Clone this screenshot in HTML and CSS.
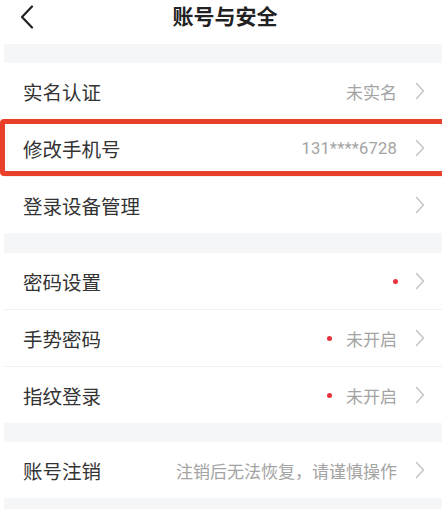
FILE: index.html
```html
<!DOCTYPE html>
<html lang="zh-CN">
<head>
<meta charset="utf-8">
<title>账号与安全</title>
<link rel="stylesheet" href="styles.css">
</head>
<body>
<header class="topbar">
  <svg class="back" width="14" height="24" viewBox="0 0 14 24"><polyline points="12,1.5 2,12 12,22.5" fill="none" stroke="#222" stroke-width="2.2" stroke-linecap="round" stroke-linejoin="round"/></svg>
  <h1 class="title">账号与安全</h1>
</header>
<main class="page">
  <div class="gap g1"></div>
  <section class="group">
    <div class="row"><span class="label">实名认证</span><span class="meta"><span class="value">未实名</span><svg class="chev" width="10" height="18" viewBox="0 0 10 18"><polyline points="1.5,1.5 8.5,9 1.5,16.5" fill="none" stroke="#c6c6c6" stroke-width="1.6" stroke-linecap="round" stroke-linejoin="round"/></svg></span></div>
    <div class="row marked"><span class="label">修改手机号</span><span class="meta"><span class="value num">131****6728</span><svg class="chev" width="10" height="18" viewBox="0 0 10 18"><polyline points="1.5,1.5 8.5,9 1.5,16.5" fill="none" stroke="#c6c6c6" stroke-width="1.6" stroke-linecap="round" stroke-linejoin="round"/></svg></span><span class="highlight"></span></div>
    <div class="row"><span class="label">登录设备管理</span><span class="meta"><svg class="chev" width="10" height="18" viewBox="0 0 10 18"><polyline points="1.5,1.5 8.5,9 1.5,16.5" fill="none" stroke="#c6c6c6" stroke-width="1.6" stroke-linecap="round" stroke-linejoin="round"/></svg></span></div>
  </section>
  <div class="gap g2"></div>
  <section class="group">
    <div class="row"><span class="label">密码设置</span><span class="meta"><span class="dot"></span><svg class="chev" width="10" height="18" viewBox="0 0 10 18"><polyline points="1.5,1.5 8.5,9 1.5,16.5" fill="none" stroke="#c6c6c6" stroke-width="1.6" stroke-linecap="round" stroke-linejoin="round"/></svg></span></div>
    <div class="row"><span class="label">手势密码</span><span class="meta"><span class="dot"></span><span class="value">未开启</span><svg class="chev" width="10" height="18" viewBox="0 0 10 18"><polyline points="1.5,1.5 8.5,9 1.5,16.5" fill="none" stroke="#c6c6c6" stroke-width="1.6" stroke-linecap="round" stroke-linejoin="round"/></svg></span></div>
    <div class="row"><span class="label">指纹登录</span><span class="meta"><span class="dot"></span><span class="value">未开启</span><svg class="chev" width="10" height="18" viewBox="0 0 10 18"><polyline points="1.5,1.5 8.5,9 1.5,16.5" fill="none" stroke="#c6c6c6" stroke-width="1.6" stroke-linecap="round" stroke-linejoin="round"/></svg></span></div>
  </section>
  <div class="gap g3"></div>
  <section class="group">
    <div class="row"><span class="label">账号注销</span><span class="meta"><span class="value">注销后无法恢复，请谨慎操作</span><svg class="chev" width="10" height="18" viewBox="0 0 10 18"><polyline points="1.5,1.5 8.5,9 1.5,16.5" fill="none" stroke="#c6c6c6" stroke-width="1.6" stroke-linecap="round" stroke-linejoin="round"/></svg></span></div>
  </section>
  <div class="gap g4"></div>
</main>
</body>
</html>
```

FILE: styles.css
```css
* { box-sizing: border-box; }
html, body {
  margin: 0;
  padding: 0;
  background: #fff;
}
body {
  width: 442px;
  height: 509px;
  overflow: hidden;
  font-family: Roboto, "Noto Sans CJK SC", sans-serif;
  color: #333;
}
.topbar {
  height: 44px;
  display: flex;
  align-items: center;
  padding: 0 0 10px 20px;
  position: relative;
}
.back { display: block; }
.title {
  flex: 1;
  margin: 0 0 0 -34px;
  padding-left: 8px;
  text-align: center;
  font-size: 21px;
  font-weight: 700;
  color: #222;
  line-height: 24px;
}
.page {
  margin-left: 4px;
}
.gap { background: #f5f6f8; height: 19px; }
.g2 { height: 20px; }
.g4 { height: 20px; }
.row {
  height: 57px;
  display: flex;
  align-items: center;
  justify-content: space-between;
  padding: 0 17px 0 19px;
  border-top: 1px solid #f1f1f1;
}
.row:first-child { height: 56px; border-top: 0; }
.label {
  font-size: 19.5px;
  color: #333;
}
.meta {
  display: flex;
  align-items: center;
}
.value {
  font-size: 17px;
  color: #a3a3a3;
  margin-right: 18px;
}
.value.num { font-size: 16.5px; letter-spacing: 0.2px; }
.dot {
  width: 5px;
  height: 5px;
  border-radius: 50%;
  background: #e9323c;
  margin-right: 14px;
}
.row .dot:nth-last-child(2) { margin-right: 17px; }
.chev { display: block; }
.marked { position: relative; }
.highlight {
  position: absolute;
  left: -4px;
  right: -6px;
  top: -1px;
  bottom: 0;
  border: 5px solid #e8402a;
  border-radius: 4px;
  pointer-events: none;
}
```
